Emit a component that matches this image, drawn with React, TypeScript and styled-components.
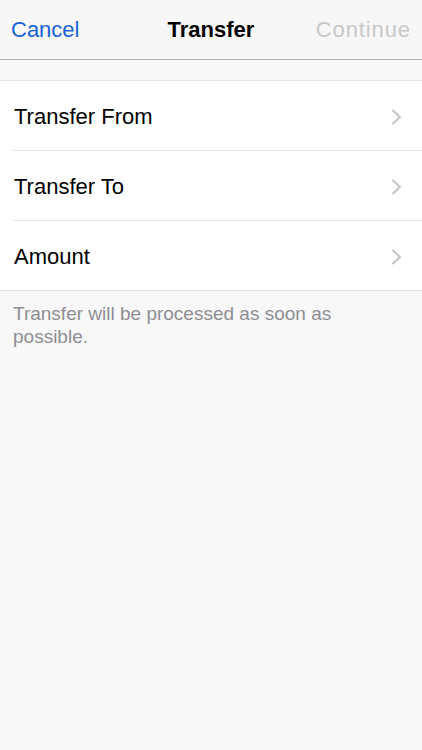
import React from 'react';
import styled, { createGlobalStyle } from 'styled-components';

const GlobalStyle = createGlobalStyle`
  html, body {
    margin: 0;
    padding: 0;
    background: #f8f8f8;
  }
  body {
    font-family: "Liberation Sans", Roboto, "Noto Sans", sans-serif;
    -webkit-font-smoothing: antialiased;
  }
`;

const rows = ['Transfer From', 'Transfer To', 'Amount'];

const Chevron = () => (
  <svg width="12" height="16" viewBox="0 0 12 16" fill="none">
    <path d="M2 1.5 L9 8 L2 14.5" stroke="#c4c4c8" strokeWidth="2" strokeLinecap="round" strokeLinejoin="round" />
  </svg>
);

const App = () => {
  return (
    <Page>
      <GlobalStyle />
      <NavBar>
        <NavButton>Cancel</NavButton>
        <NavTitle>Transfer</NavTitle>
        <NavButton disabled>Continue</NavButton>
      </NavBar>

      <List>
        {rows.map((label) => (
          <Row key={label}>
            <RowLabel>{label}</RowLabel>
            <Chevron />
          </Row>
        ))}
      </List>

      <Footer>Transfer will be processed as soon as possible.</Footer>
    </Page>
  );
};

export default App;

const Page = styled.div`
  min-height: 750px;
  background: #f8f8f8;
`;

const NavBar = styled.div`
  height: 60px;
  display: flex;
  align-items: center;
  justify-content: space-between;
  padding: 1px 11px 0 11px;
  background: #f7f7f7;
  border-bottom: 1px solid #b2b2b2;
  box-sizing: border-box;
  position: relative;
`;

const NavButton = styled.button`
  border: none;
  background: none;
  padding: 0;
  font-family: inherit;
  font-size: 22px;
  color: #1a63d8;
  cursor: pointer;

  &:disabled {
    color: #c8c8c8;
    letter-spacing: 0.9px;
    cursor: default;
  }
`;

const NavTitle = styled.h1`
  position: absolute;
  left: 50%;
  transform: translateX(-50%);
  margin: 0;
  font-size: 22px;
  font-weight: bold;
  color: #000;
`;

const List = styled.div`
  margin-top: 20px;
  background: #fff;
  border-top: 1px solid #e4e4e4;
  border-bottom: 1px solid #e0e0e0;
`;

const Row = styled.div`
  height: 70px;
  display: flex;
  align-items: center;
  justify-content: space-between;
  margin-left: 13px;
  padding: 2px 19px 0 1px;
  box-sizing: border-box;
  border-bottom: 1px solid #e6e6e6;

  &:last-child {
    border-bottom: none;
    height: 69px;
  }
`;

const RowLabel = styled.span`
  font-size: 22px;
  color: #000;
`;

const Footer = styled.p`
  margin: 0;
  padding: 11px 60px 0 13px;
  font-size: 19px;
  line-height: 23px;
  color: #8e8e93;
`;
